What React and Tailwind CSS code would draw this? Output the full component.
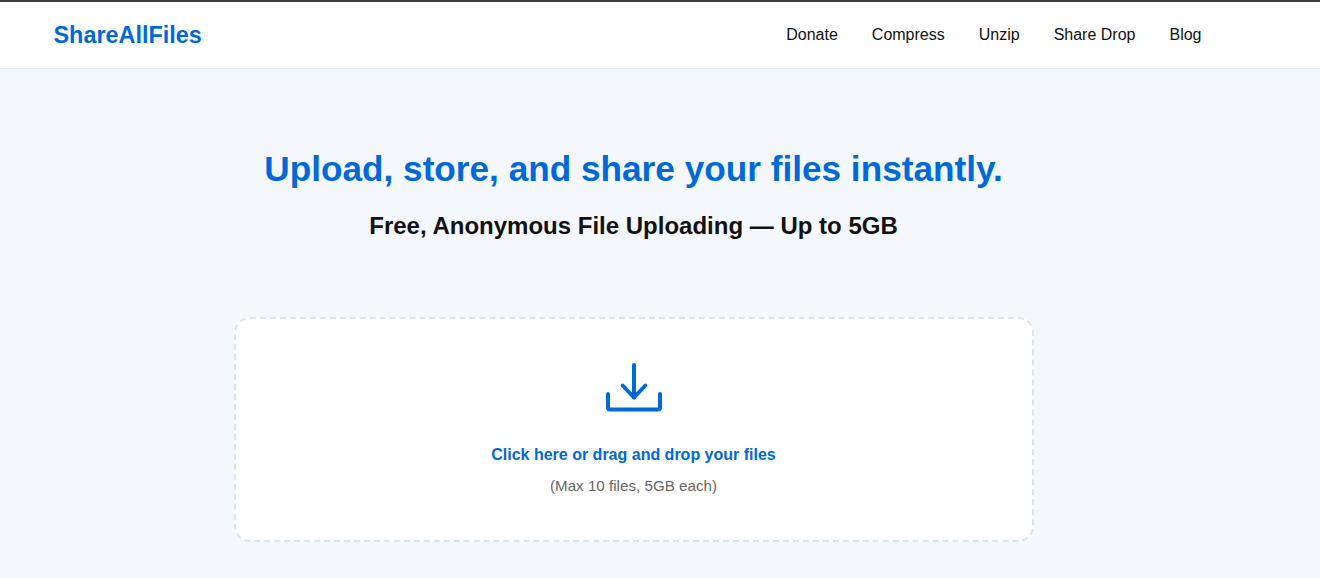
import React from "react";

const navLinks = ["Donate", "Compress", "Unzip", "Share Drop", "Blog"];

export default function App() {
  return (
    <div className="min-h-[578px] bg-[#f4f7fb] font-['Liberation_Sans',Arial,sans-serif]">
      <header className="h-[69px] bg-white border-t-2 border-t-[#3b3b3b] border-b border-b-[#e2e6ec] flex items-center justify-between pl-[53.5px] pr-[118.5px]">
        <a href="#" className="mt-[2px] text-[23.4px] font-bold text-[#0069d9]">
          ShareAllFiles
        </a>
        <nav className="flex items-center gap-[34px]">
          {navLinks.map((link) => (
            <a key={link} href="#" className="text-base text-[#111]">
              {link}
            </a>
          ))}
        </nav>
      </header>

      <main className="w-[1267px] flex flex-col items-center">
        <h1 className="mt-[77px] text-[35.2px] leading-[46px] font-bold text-[#0069d9]">
          Upload, store, and share your files instantly.
        </h1>
        <h2 className="mt-[20px] text-2xl leading-[28px] font-bold text-[#111]">
          Free, Anonymous File Uploading — Up to 5GB
        </h2>

        <div className="mt-[77px] w-[800px] h-[225px] bg-white rounded-2xl border-2 border-dashed border-[#dde2ea] flex flex-col items-center">
          <svg
            className="mt-[44px]"
            width="60"
            height="52"
            viewBox="0 0 60 52"
            fill="none"
            stroke="#0069d9"
            strokeWidth="4"
            strokeLinecap="round"
            strokeLinejoin="round"
          >
            <path d="M30 2v32.5" />
            <path d="M18.7 22.5L30 34.5l11.3-12" />
            <path d="M4 31v13.5q0 2 2 2h48q2 0 2-2V31" />
          </svg>
          <p className="mt-[28px] text-base font-bold text-[#0069d9]">
            Click here or drag and drop your files
          </p>
          <p className="mt-[8px] text-[15.2px] text-[#666]">(Max 10 files, 5GB each)</p>
        </div>
      </main>
    </div>
  );
}
